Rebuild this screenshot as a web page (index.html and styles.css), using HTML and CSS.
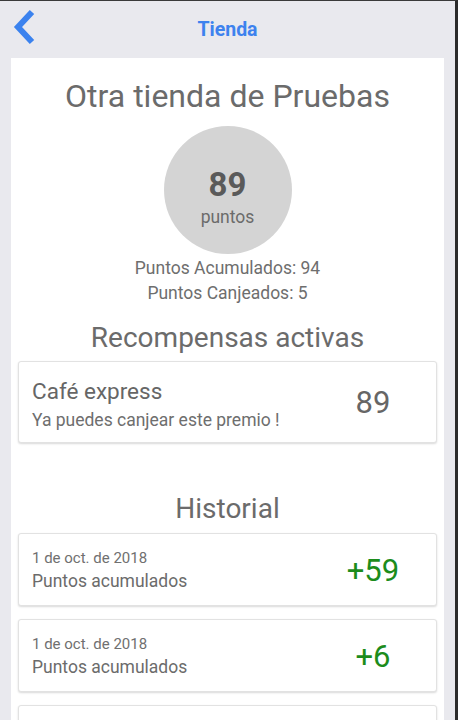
FILE: index.html
```html
<!DOCTYPE html>
<html lang="es">
<head>
    <meta charset="UTF-8">
    <meta name="viewport" content="width=device-width, initial-scale=1.0">
    <title>Tienda</title>
    <link rel="stylesheet" href="styles.css">
</head>
<body>
    <div class="frame">
        <header class="topbar">
            <a class="back" href="#">
                <svg width="24" height="36" viewBox="0 0 24 36">
                    <polyline points="20,3 6,18 20,33" fill="none" stroke="#3b82ee" stroke-width="6" stroke-linejoin="miter"/>
                </svg>
            </a>
            <span class="topbar-title">Tienda</span>
        </header>

        <main class="panel">
            <h1 class="store-name">Otra tienda de Pruebas</h1>

            <div class="points-circle">
                <span class="points-value">89</span>
                <span class="points-label">puntos</span>
            </div>

            <p class="stat">Puntos Acumulados: 94</p>
            <p class="stat">Puntos Canjeados: 5</p>

            <h2 class="section-title">Recompensas activas</h2>
            <div class="card reward">
                <div class="card-text">
                    <div class="reward-name">Café express</div>
                    <div class="reward-note">Ya puedes canjear este premio !</div>
                </div>
                <div class="card-num reward-num">89</div>
            </div>

            <h2 class="section-title history-title">Historial</h2>
            <div class="card entry">
                <div class="card-text">
                    <div class="entry-date">1 de oct. de 2018</div>
                    <div class="entry-desc">Puntos acumulados</div>
                </div>
                <div class="card-num entry-num">+59</div>
            </div>
            <div class="card entry">
                <div class="card-text">
                    <div class="entry-date">1 de oct. de 2018</div>
                    <div class="entry-desc">Puntos acumulados</div>
                </div>
                <div class="card-num entry-num">+6</div>
            </div>
            <!-- next entry, scrolled below the fold -->
            <div class="card entry"></div>
        </main>
    </div>
</body>
</html>
```

FILE: styles.css
```css
html, body {
    margin: 0;
    padding: 0;
    height: 100%;
    overflow: hidden;
}
body {
    font-family: Roboto, "Liberation Sans", sans-serif;
    background-color: #e9e9ee;
    color: #6b6b6b;
}
.frame {
    height: 100%;
    overflow: hidden;
    border-top: 1px solid #3a3a3a;
    border-right: 3px solid #2b2b2b;
    box-sizing: border-box;
}
.topbar {
    height: 57px;
    display: flex;
    align-items: center;
    justify-content: center;
    position: relative;
}
.back {
    position: absolute;
    left: 12px;
    top: 8px;
    display: block;
    line-height: 0;
}
.topbar-title {
    font-size: 19.5px;
    font-weight: bold;
    color: #3d82ee;
    margin-top: -1px;
}
.panel {
    margin: 0 11px;
    background: #fff;
    padding: 1px 7px 0;
    min-height: 700px;
}
.store-name {
    margin: 18px 0 0;
    font-size: 32px;
    font-weight: normal;
    text-align: center;
    color: #6b6b6b;
    line-height: 38px;
}
.points-circle {
    width: 128px;
    height: 128px;
    margin: 11px auto 0;
    border-radius: 50%;
    background: #d4d4d4;
    display: flex;
    flex-direction: column;
    align-items: center;
    justify-content: center;
}
.points-value {
    font-size: 33px;
    font-weight: bold;
    color: #5a5a5a;
    line-height: 38px;
    margin-top: 14px;
}
.points-label {
    font-size: 17.5px;
    color: #6b6b6b;
    line-height: 22px;
    margin-top: 2px;
}
.stat {
    margin: 0;
    text-align: center;
    font-size: 17.5px;
    line-height: 25px;
    color: #6e6e6e;
}
.stat:first-of-type {
    margin-top: 2px;
}
.section-title {
    margin: 16px 0 7px;
    font-size: 28px;
    font-weight: normal;
    text-align: center;
    line-height: 32px;
    color: #6b6b6b;
}
.history-title {
    margin-top: 50px;
    margin-bottom: 8px;
}
.card {
    display: flex;
    align-items: center;
    border: 1px solid #e2e2e2;
    border-radius: 3px;
    box-shadow: 0 1px 2px rgba(0, 0, 0, 0.15);
    background: #fff;
    padding: 0 13px 0 13px;
    margin-bottom: 13px;
}
.card-text {
    flex: 1;
}
.card-num {
    width: 100px;
    text-align: center;
}
.reward {
    height: 80px;
}
.reward-name {
    font-size: 22.5px;
    line-height: 26px;
    color: #666;
    margin-top: 5px;
}
.reward-note {
    font-size: 17.5px;
    line-height: 22px;
    color: #6e6e6e;
    margin-top: 5px;
}
.reward-num {
    font-size: 31px;
    color: #666;
}
.entry {
    height: 71px;
}
.entry-date {
    font-size: 15px;
    line-height: 18px;
    color: #707070;
    margin-top: 2px;
}
.entry-desc {
    font-size: 17.5px;
    line-height: 22px;
    color: #6b6b6b;
    margin-top: 3px;
}
.entry-num {
    font-size: 31px;
    color: #1c8c1c;
    margin-top: 2px;
}
```
